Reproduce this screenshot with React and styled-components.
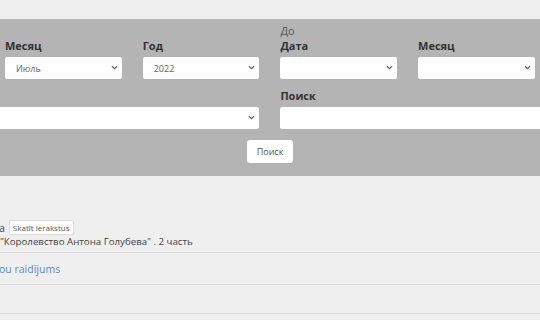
import React from "react";
import styled, { createGlobalStyle } from "styled-components";

const GlobalStyle = createGlobalStyle`
  html, body {
    margin: 0;
    padding: 0;
    background: #efefef;
    overflow: hidden;
  }
  body {
    width: 540px;
    font-family: "Open Sans", "Liberation Sans", sans-serif;
    color: #444;
  }
`;

const fields = [
  { col: 2, label: "Месяц", value: "Июль" },
  { col: 3, label: "Год", value: "2022" },
  { col: 4, caption: "До", label: "Дата", value: "" },
  { col: 5, label: "Месяц", value: "" },
];

const Chevron = () => (
  <svg width="7" height="5" viewBox="0 0 7 5">
    <path d="M1 1.2 L3.5 3.6 L6 1.2" fill="none" stroke="#666" strokeWidth="1.3" />
  </svg>
);

const Select = ({ value }) => (
  <SelectBox>
    <SelectValue>{value}</SelectValue>
    <Arrow>
      <Chevron />
    </Arrow>
  </SelectBox>
);

const App = () => {
  return (
    <>
      <GlobalStyle />
      <TopStrip />
      <Panel>
        <Grid>
          {fields.map((f, i) => (
            <Field key={i} $col={f.col}>
              {f.caption && <Caption>{f.caption}</Caption>}
              <Label>{f.label}</Label>
              <Select value={f.value} />
            </Field>
          ))}
          <Field $col={1} $span={3}>
            <Select value="" />
          </Field>
          <Field $col={4} $span={3}>
            <Label>Поиск</Label>
            <Input />
          </Field>
        </Grid>
        <ButtonRow>
          <SearchButton>Поиск</SearchButton>
        </ButtonRow>
      </Panel>
      <Content>
        <MetaRow>
          a <Badge>Skatīt ierakstus</Badge>
        </MetaRow>
        <Title>"Королевство Антона Голубева" . 2 часть</Title>
        <Divider />
        <LinkRow>
          <Link href="#">ou raidījums</Link>
        </LinkRow>
        <Divider />
        <EmptyRow />
        <Divider />
      </Content>
    </>
  );
};

const TopStrip = styled.div`
  height: 19px;
  background: #efefef;
`;

const Panel = styled.div`
  background: #b4b4b4;
  padding: 5px 0 13px;
  overflow: hidden;
`;

const Grid = styled.div`
  display: grid;
  grid-template-columns: repeat(6, 116.7px);
  grid-auto-flow: dense;
  column-gap: 21px;
  row-gap: 9px;
  align-items: end;
  margin-left: -132.7px;
`;

const Field = styled.div`
  display: flex;
  flex-direction: column;
  grid-row: ${(p) => (p.$span ? 2 : 1)};
  grid-column: ${(p) => p.$col} / span ${(p) => p.$span || 1};
`;

const Caption = styled.div`
  font-size: 11px;
  line-height: 14px;
  color: #555;
`;

const Label = styled.div`
  font-size: 11px;
  line-height: 15px;
  font-weight: 700;
  color: #333;
  margin-bottom: 4px;
`;

const SelectBox = styled.div`
  position: relative;
  height: 22px;
  background: #fff;
  border-radius: 2px;
  display: flex;
  align-items: center;
  padding-left: 11px;
`;

const SelectValue = styled.span`
  font-size: 9px;
  color: #666;
`;

const Arrow = styled.span`
  position: absolute;
  right: 4px;
  top: 8px;
  display: flex;
`;

const Input = styled.div`
  height: 22px;
  background: #fff;
  border-radius: 2px;
`;

const ButtonRow = styled.div`
  display: flex;
  justify-content: center;
  margin-top: 11px;
`;

const SearchButton = styled.button`
  width: 46px;
  height: 23px;
  padding: 0;
  border: none;
  border-radius: 3px;
  background: #fff;
  font-family: "Open Sans", "Liberation Sans", sans-serif;
  font-size: 9px;
  color: #555;
`;

const Content = styled.div`
  padding-top: 44px;
`;

const MetaRow = styled.div`
  display: flex;
  align-items: center;
  gap: 4px;
  height: 15px;
  font-size: 10.5px;
  color: #444;
  margin-left: -1px;
`;

const Badge = styled.span`
  display: inline-flex;
  align-items: center;
  height: 13px;
  padding: 0 3px;
  background: #fff;
  border: 1px solid #ddd;
  border-radius: 2px;
  font-size: 8px;
  color: #555;
`;

const Title = styled.div`
  font-size: 9.7px;
  line-height: 14px;
  color: #444;
  margin-bottom: 3px;
`;

const Divider = styled.div`
  height: 1px;
  background: #dcdcdc;
`;

const LinkRow = styled.div`
  padding: 7px 0 7px;
  line-height: 15px;
`;

const Link = styled.a`
  font-size: 10.5px;
  color: #5a8ac6;
  text-decoration: none;
  margin-left: -1px;
`;

const EmptyRow = styled.div`
  height: 28px;
`;

export default App;
